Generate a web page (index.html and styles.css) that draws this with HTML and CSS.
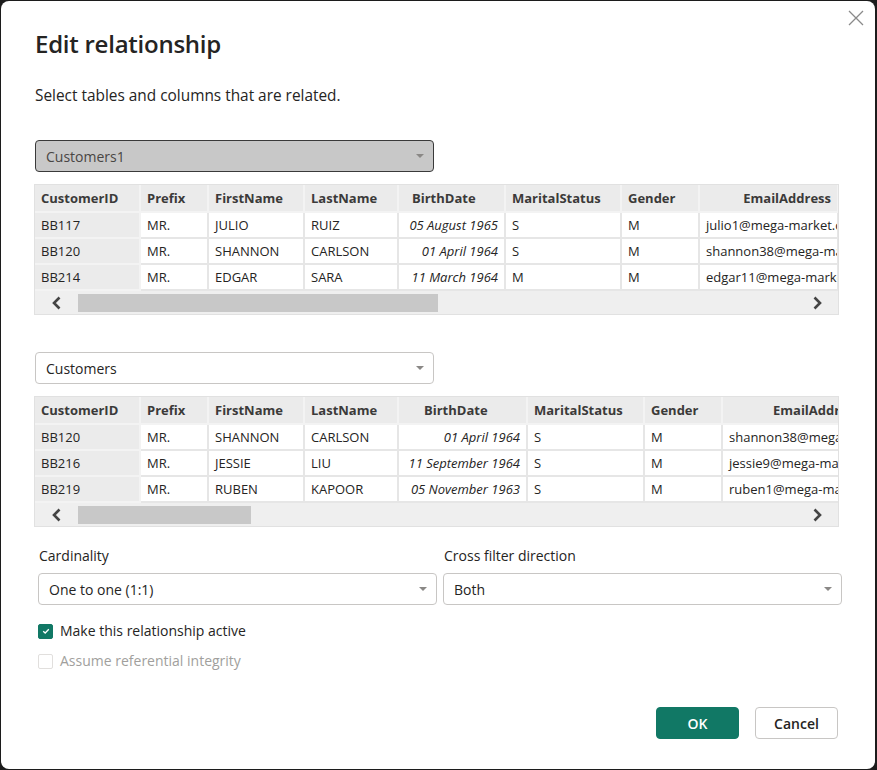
FILE: index.html
```html
<!DOCTYPE html>
<html>
<head>
<meta charset="utf-8">
<link rel="stylesheet" href="styles.css">
</head>
<body>
<div class="dialog">
  <button class="close" aria-label="Close">
    <svg width="16" height="16" viewBox="0 0 16 16"><path d="M1 1 L15 15 M15 1 L1 15" stroke="#8a8a8a" stroke-width="1.3" fill="none"/></svg>
  </button>
  <h1 class="title">Edit relationship</h1>
  <p class="subtitle">Select tables and columns that are related.</p>

  <div class="select select-disabled">
    <span>Customers1</span>
    <span class="caret"></span>
  </div>

  <div class="grid">
    <table class="tbl">
      <colgroup>
        <col style="width:105px"><col style="width:68px"><col style="width:96px"><col style="width:94px"><col style="width:107px"><col style="width:116px"><col style="width:78px"><col style="width:139px">
      </colgroup>
      <thead>
        <tr><th>CustomerID</th><th>Prefix</th><th>FirstName</th><th>LastName</th><th class="bd1">BirthDate</th><th>MaritalStatus</th><th>Gender</th><th class="r">EmailAddress</th></tr>
      </thead>
      <tbody>
        <tr><td class="key">BB117</td><td>MR.</td><td>JULIO</td><td>RUIZ</td><td class="date">05 August 1965</td><td>S</td><td>M</td><td>julio1@mega-market.com</td></tr>
        <tr><td class="key">BB120</td><td>MR.</td><td>SHANNON</td><td>CARLSON</td><td class="date">01 April 1964</td><td>S</td><td>M</td><td>shannon38@mega-market.com</td></tr>
        <tr><td class="key">BB214</td><td>MR.</td><td>EDGAR</td><td>SARA</td><td class="date">11 March 1964</td><td>M</td><td>M</td><td>edgar11@mega-market.com</td></tr>
      </tbody>
    </table>
    <div class="hscroll">
      <span class="arrow">
        <svg width="14" height="14" viewBox="0 0 14 14"><path d="M9.5 1.5 L4 7 L9.5 12.5" stroke="#444" stroke-width="2.6" fill="none"/></svg>
      </span>
      <div class="track"><div class="thumb" style="width:360px"></div></div>
      <span class="arrow">
        <svg width="14" height="14" viewBox="0 0 14 14"><path d="M4.5 1.5 L10 7 L4.5 12.5" stroke="#444" stroke-width="2.6" fill="none"/></svg>
      </span>
    </div>
  </div>

  <div class="select select-second">
    <span>Customers</span>
    <span class="caret"></span>
  </div>

  <div class="grid">
    <table class="tbl">
      <colgroup>
        <col style="width:105px"><col style="width:68px"><col style="width:96px"><col style="width:94px"><col style="width:129px"><col style="width:117px"><col style="width:78px"><col style="width:139px">
      </colgroup>
      <thead>
        <tr><th>CustomerID</th><th>Prefix</th><th>FirstName</th><th>LastName</th><th class="bd2">BirthDate</th><th>MaritalStatus</th><th>Gender</th><th class="email2">EmailAddress</th></tr>
      </thead>
      <tbody>
        <tr><td class="key">BB120</td><td>MR.</td><td>SHANNON</td><td>CARLSON</td><td class="date">01 April 1964</td><td>S</td><td>M</td><td>shannon38@mega-market.com</td></tr>
        <tr><td class="key">BB216</td><td>MR.</td><td>JESSIE</td><td>LIU</td><td class="date">11 September 1964</td><td>S</td><td>M</td><td>jessie9@mega-market.com</td></tr>
        <tr><td class="key">BB219</td><td>MR.</td><td>RUBEN</td><td>KAPOOR</td><td class="date">05 November 1963</td><td>S</td><td>M</td><td>ruben1@mega-market.com</td></tr>
      </tbody>
    </table>
    <div class="hscroll">
      <span class="arrow">
        <svg width="14" height="14" viewBox="0 0 14 14"><path d="M9.5 1.5 L4 7 L9.5 12.5" stroke="#444" stroke-width="2.6" fill="none"/></svg>
      </span>
      <div class="track"><div class="thumb" style="width:173px"></div></div>
      <span class="arrow">
        <svg width="14" height="14" viewBox="0 0 14 14"><path d="M4.5 1.5 L10 7 L4.5 12.5" stroke="#444" stroke-width="2.6" fill="none"/></svg>
      </span>
    </div>
  </div>

  <div class="options">
    <div class="field">
      <label class="field-label">Cardinality</label>
      <div class="select">
        <span>One to one (1:1)</span>
        <span class="caret"></span>
      </div>
    </div>
    <div class="field">
      <label class="field-label">Cross filter direction</label>
      <div class="select">
        <span>Both</span>
        <span class="caret"></span>
      </div>
    </div>
  </div>

  <div class="check">
    <span class="box box-on">
      <svg width="10" height="10" viewBox="0 0 10 10"><path d="M2.2 5.2 L4.2 7 L7.8 3.2" stroke="#fff" stroke-width="1.3" fill="none"/></svg>
    </span>
    <span class="check-label">Make this relationship active</span>
  </div>
  <div class="check check-disabled">
    <span class="box"></span>
    <span class="check-label">Assume referential integrity</span>
  </div>

  <div class="footer">
    <button class="btn btn-primary">OK</button>
    <button class="btn">Cancel</button>
  </div>
</div>
</body>
</html>
```

FILE: styles.css
```css
* { box-sizing: border-box; }
html, body {
  margin: 0;
  padding: 0;
  background: #1c1c1c;
}
body {
  padding: 1px 2px 1px 1px;
  font-family: "Open Sans", "Noto Sans", sans-serif;
  color: #252423;
}
.dialog {
  position: relative;
  width: 874px;
  height: 768px;
  background: #fff;
  border-radius: 8px;
  padding: 27px 0 0 34px;
}
.close {
  position: absolute;
  top: 8px;
  right: 10px;
  width: 18px;
  height: 18px;
  padding: 0;
  border: none;
  background: transparent;
  display: flex;
  align-items: center;
  justify-content: center;
}
.title {
  margin: 0;
  font-size: 24px;
  font-weight: 600;
  line-height: 32px;
  color: #252423;
  letter-spacing: -0.25px;
}
.subtitle {
  margin: 26px 0 0 0;
  font-size: 15.4px;
  line-height: 20px;
  color: #252423;
}
.select {
  width: 399px;
  height: 32px;
  border: 1px solid #c8c6c4;
  border-radius: 4px;
  display: flex;
  align-items: center;
  justify-content: space-between;
  padding: 0 9px 0 10px;
  font-size: 14px;
  color: #252423;
  background: #fff;
}
.select-disabled {
  margin-top: 34px;
  background: #c8c8c8;
  border-color: #3a3a3a;
  color: #484644;
}
.select-second { margin-top: 37px; }
.caret {
  width: 0;
  height: 0;
  border-left: 4px solid transparent;
  border-right: 4px solid transparent;
  border-top: 4px solid #8a8886;
}
.grid {
  margin-top: 12px;
  margin-left: -1px;
  width: 805px;
  border: 1px solid #e1e1e1;
  overflow: hidden;
  background: #fff;
}
.tbl {
  border-collapse: collapse;
  table-layout: fixed;
  width: 803px;
  font-size: 13px;
}
.tbl th, .tbl td {
  height: 26px;
  padding: 0 6px;
  white-space: nowrap;
  overflow: hidden;
  text-align: left;
  border-right: 2px solid #e6e6e6;
  border-bottom: 2px solid #e6e6e6;
  color: #252423;
}
.tbl th {
  height: 27px;
  background: #ebebeb;
  font-weight: 700;
  color: #3b3a39;
  border-right-color: #f3f3f3;
  border-bottom-color: #f3f3f3;
}
.tbl th.r { text-align: right; }
.tbl th.bd1 { padding-left: 13px; }
.tbl th.bd2 { padding-left: 25px; }
.tbl th.email2 { padding-left: 50px; }
.tbl td.key {
  background: #ebebeb;
  border-right-color: #f3f3f3;
  border-bottom-color: #f3f3f3;
}
.tbl td.date {
  text-align: right;
  font-style: italic;
}
.hscroll {
  height: 23px;
  background: #efefef;
  display: flex;
  align-items: center;
}
.arrow {
  width: 43px;
  display: flex;
  justify-content: center;
}
.track {
  flex: 1;
  height: 18px;
}
.thumb {
  height: 18px;
  background: #c8c8c8;
}
.options {
  margin-top: 19px;
  display: flex;
  gap: 6px;
  padding-left: 3px;
}
.field { display: flex; flex-direction: column; }
.field-label {
  font-size: 14px;
  line-height: 20px;
  color: #252423;
  margin-bottom: 7px;
  padding-left: 1px;
}
.check {
  margin-top: 16px;
  margin-left: 3px;
  display: flex;
  align-items: center;
  gap: 7px;
  font-size: 14px;
  line-height: 20px;
}
.check + .check { margin-top: 10px; }
.box {
  width: 15px;
  height: 15px;
  border: 1px solid #e1dfdd;
  border-radius: 2px;
  display: flex;
  align-items: center;
  justify-content: center;
}
.box-on {
  background: #117865;
  border-color: #117865;
}
.check-disabled { color: #a19f9d; }
.footer {
  margin-top: 36px;
  width: 803px;
  display: flex;
  justify-content: flex-end;
  gap: 16px;
}
.btn {
  width: 83px;
  height: 32px;
  border: 1px solid #c8c6c4;
  border-radius: 4px;
  background: #fff;
  font-family: "Open Sans", "Noto Sans", sans-serif;
  font-size: 14px;
  font-weight: 600;
  color: #252423;
}
.btn-primary {
  background: #117865;
  border-color: #117865;
  color: #fff;
}
```
